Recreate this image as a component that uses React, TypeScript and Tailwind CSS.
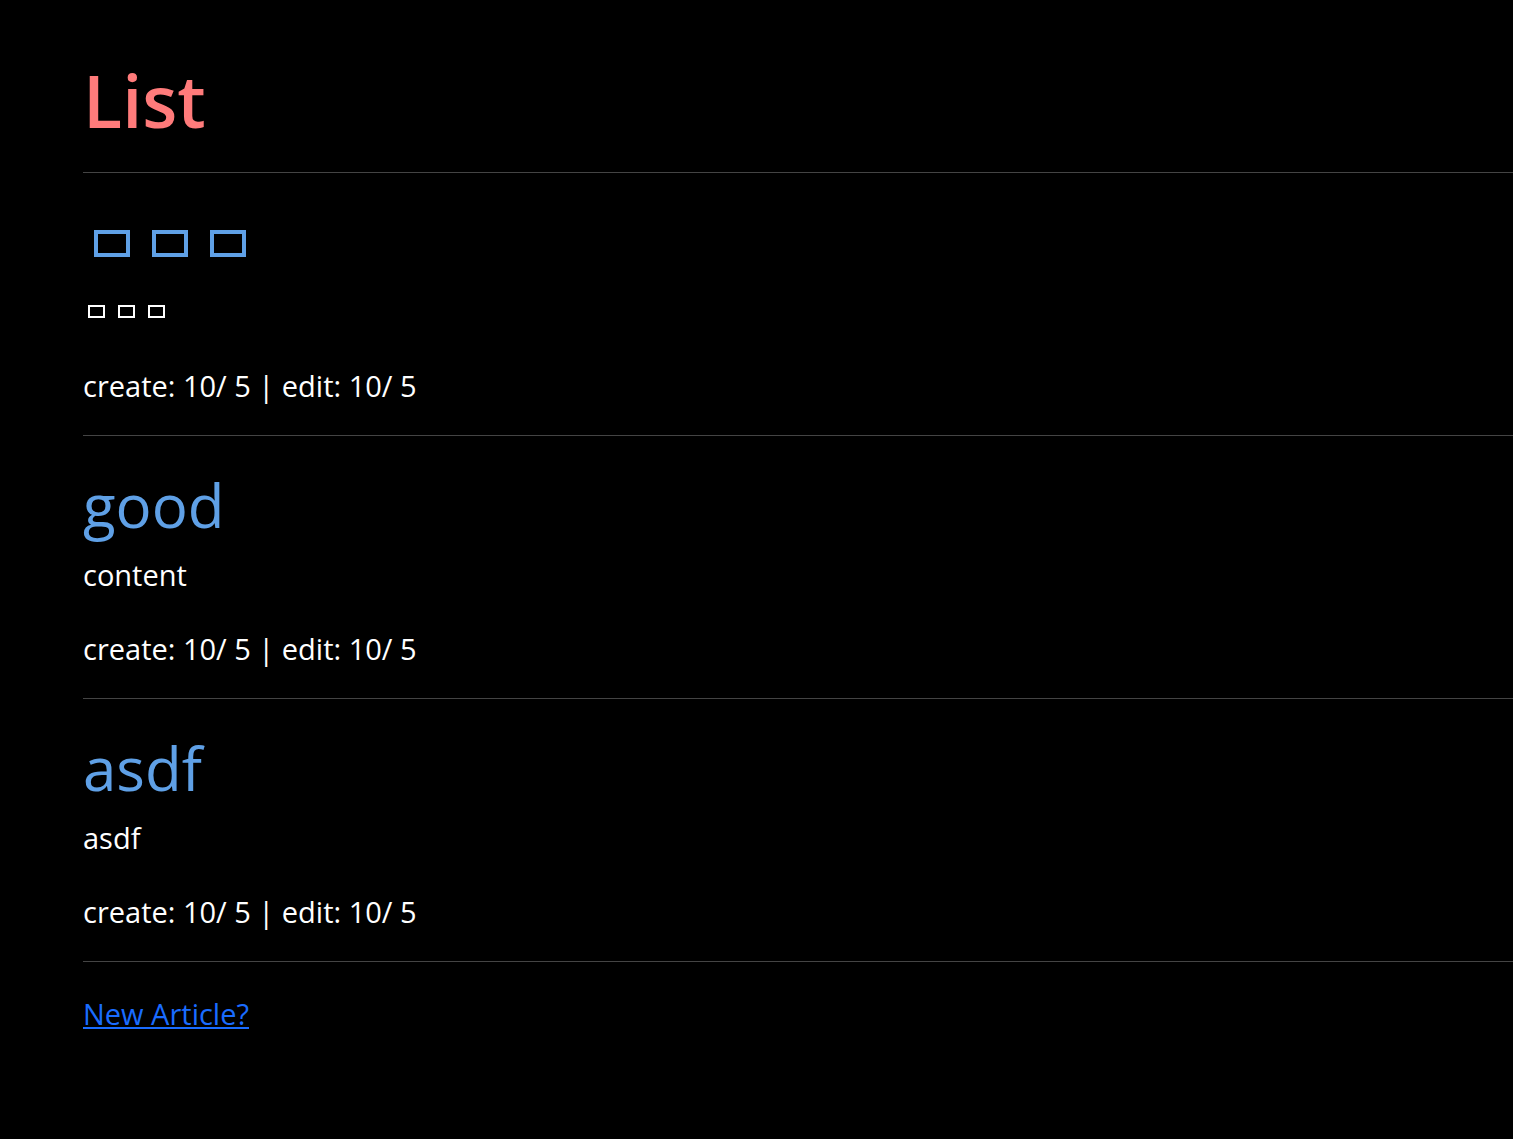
const posts = [
  { title: null, content: null },
  { title: 'good', content: 'content' },
  { title: 'asdf', content: 'asdf' },
];

const Tofu = ({ big }: { big?: boolean }) =>
  big ? (
    <span className="inline-block w-[36px] h-[27px] border-[4px] border-[#5fa0e6]" />
  ) : (
    <span className="inline-block w-[17px] h-[13px] border-[2px] border-white" />
  );

export default function App() {
  return (
    <div className="min-h-screen bg-black text-white font-['Open_Sans',sans-serif]">
      <div className="pl-[83px]">
        <h1 className="pt-[62px] pb-[34px] text-[72px] leading-[76px] font-semibold text-[#ff7b7b] border-b border-[#444]">
          List
        </h1>

        {posts.map((post, i) => (
          <div key={i} className="border-b border-[#444] pt-[39px] pb-[35px]">
            {post.title ? (
              <h2 className="h-[60px] text-[60px] leading-[60px] text-[#5fa0e6]">{post.title}</h2>
            ) : (
              <div className="h-[60px] flex items-start gap-[22px] pl-[11px] pt-[18px]">
                <Tofu big />
                <Tofu big />
                <Tofu big />
              </div>
            )}
            {post.content ? (
              <p className="mt-[26px] text-[29px] leading-[28px]">{post.content}</p>
            ) : (
              <div className="mt-[26px] h-[28px] flex items-start gap-[13px] pl-[5px] pt-[7px]">
                <Tofu />
                <Tofu />
                <Tofu />
              </div>
            )}
            <p className="mt-[46px] text-[29px] leading-[28px]">create: 10/ 5 | edit: 10/ 5</p>
          </div>
        ))}

        <a href="#" className="inline-block mt-[38px] text-[29px] leading-[28px] text-[#1a6cff] underline">
          New Article?
        </a>
      </div>
    </div>
  );
}
